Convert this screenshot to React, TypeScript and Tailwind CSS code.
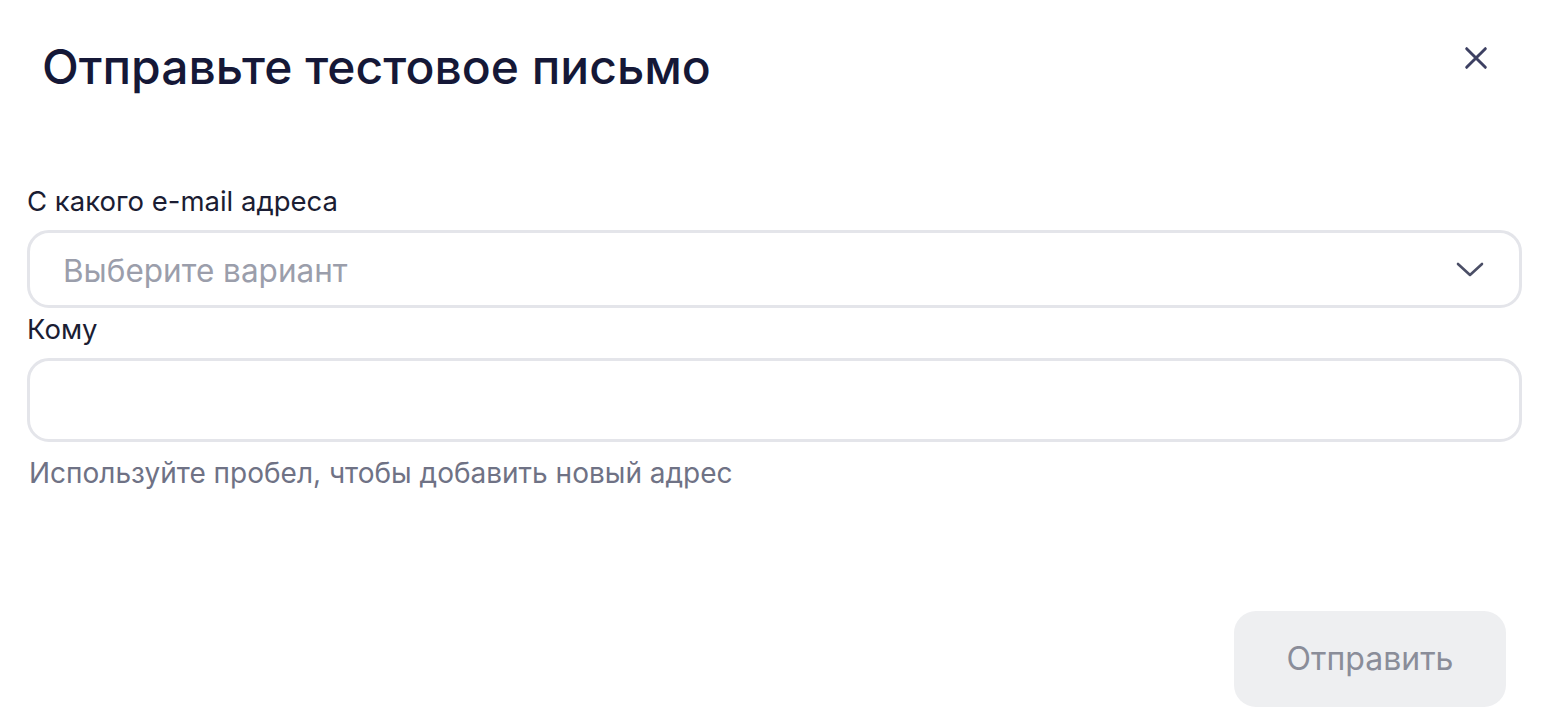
import React from 'react';

export default function App() {
  return (
    <div className="w-[1552px] h-[724px] bg-white relative font-['Inter',sans-serif]">
      <div className="flex items-start justify-between pl-[42px] pr-[56px] pt-[38px]">
        <h1 className="text-[48px] leading-[58px] font-medium text-[#151837]">
          Отправьте тестовое письмо
        </h1>
        <button className="w-[40px] h-[40px] flex items-center justify-center text-[#3d4062]">
          <svg width="28" height="28" viewBox="0 0 24 24" fill="none" stroke="currentColor" strokeWidth="2.5" strokeLinecap="round">
            <path d="M4 4l16 16M20 4L4 20" />
          </svg>
        </button>
      </div>

      <div className="px-[27px] pt-[88px] flex flex-col">
        <label className="text-[27.5px] leading-[34px] text-[#1b1d33]">С какого e-mail адреса</label>
        <div className="mt-[12px] w-[1495px] h-[78px] rounded-[22px] border-[3px] border-[#e4e5ea] flex items-center justify-between pl-[33px] pr-[34px]">
          <span className="pt-[3px] text-[31.5px] text-[#9b9eab]">Выберите вариант</span>
          <svg width="30" height="18" viewBox="0 0 30 18" fill="none" stroke="#4b4e66" strokeWidth="2.6" strokeLinecap="round" strokeLinejoin="round">
            <path d="M3 4l12 11L27 4" />
          </svg>
        </div>
        <label className="mt-[4px] text-[27.5px] leading-[34px] text-[#1b1d33]">Кому</label>
        <div className="mt-[12px] w-[1495px] h-[84px] rounded-[22px] border-[3px] border-[#e4e5ea]" />
        <p className="mt-[14px] pl-[2px] text-[28px] leading-[34px] text-[#6f7285]">
          Используйте пробел, чтобы добавить новый адрес
        </p>
      </div>

      <div className="flex justify-end pr-[46px] mt-[121px]">
        <button className="w-[272px] h-[96px] rounded-[22px] bg-[#eeeff1] text-[32px] text-[#8a8d99]">
          Отправить
        </button>
      </div>
    </div>
  );
}
